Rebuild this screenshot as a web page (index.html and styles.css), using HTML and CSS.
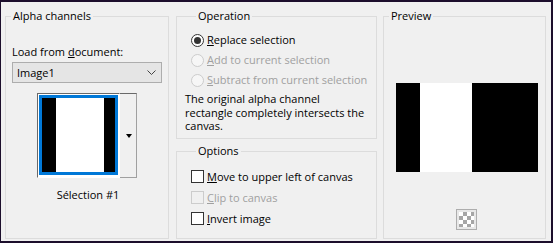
FILE: index.html
```html
<!DOCTYPE html>
<html>
<head>
<meta charset="utf-8">
<link rel="stylesheet" href="styles.css">
</head>
<body>
<div class="dialog">
  <fieldset class="group alpha">
    <legend>Alpha channels</legend>
    <div class="lbl-load">Load from <u>d</u>ocument:</div>
    <div class="combo">
      <span>Image1</span>
      <svg class="chev" width="9" height="5" viewBox="0 0 9 5"><polyline points="0.5,0.5 4.5,4.5 8.5,0.5" fill="none" stroke="#444" stroke-width="1"/></svg>
    </div>
    <div class="thumb-row">
      <div class="thumb"><div class="thumb-sel"><div class="thumb-img"></div></div></div>
      <div class="thumb-btn"><span class="tri"></span></div>
    </div>
    <div class="thumb-label">Sélection #1</div>
  </fieldset>

  <div class="middle">
    <fieldset class="group operation">
      <legend>Operation</legend>
      <div class="row"><span class="radio checked"></span><span><u>R</u>eplace selection</span></div>
      <div class="row disabled"><span class="radio"></span><span><u>A</u>dd to current selection</span></div>
      <div class="row disabled"><span class="radio"></span><span><u>S</u>ubtract from current selection</span></div>
      <p class="info">The original alpha channel rectangle completely intersects the canvas.</p>
    </fieldset>
    <fieldset class="group options">
      <legend>Options</legend>
      <div class="row crow"><span class="check"></span><span><u>M</u>ove to upper left of canvas</span></div>
      <div class="row crow disabled"><span class="check"></span><span><u>C</u>lip to canvas</span></div>
      <div class="row crow"><span class="check"></span><span><u>I</u>nvert image</span></div>
    </fieldset>
  </div>

  <fieldset class="group preview">
    <legend>Preview</legend>
    <div class="preview-img"></div>
    <div class="checker-btn"><div class="checker"></div></div>
  </fieldset>
</div>
</body>
</html>
```

FILE: styles.css
```css
html, body {
  margin: 0;
  padding: 0;
  background: #f0f0f0;
}
.dialog {
  box-sizing: border-box;
  width: 553px;
  height: 243px;
  border-style: solid;
  border-color: #1c0e2c;
  border-width: 2px 2px 2px 1px;
  background: #f0f0f0;
  display: flex;
  padding: 6px 5px 2px 4px;
  font-family: "Open Sans", "Noto Sans", sans-serif;
  font-size: 11px;
  color: #000;
}
.group {
  margin: 0;
  padding: 0;
  border: 1px solid #dcdcdc;
  min-width: 0;
  box-sizing: border-box;
}
.group legend {
  margin-left: 5px;
  padding: 0 2px;
  line-height: 16px;
  height: 16px;
}
.alpha {
  width: 164px;
  padding: 0 6px;
}
.alpha legend { margin-left: -1px; }
.middle {
  width: 201px;
  margin-left: 7px;
  display: flex;
  flex-direction: column;
  gap: 4px;
}
.preview {
  width: 163px;
  margin-left: 6px;
}
.lbl-load {
  margin-top: 20px;
  line-height: 16px;
  height: 16px;
}
.combo {
  margin-top: 2px;
  box-sizing: border-box;
  width: 150px;
  height: 21px;
  border: 1px solid #adadad;
  background: #e5e5e5;
  display: flex;
  align-items: center;
  justify-content: space-between;
  padding: 0 5px 0 4px;
}
.combo span { line-height: 16px; }
.thumb-row {
  display: flex;
  margin-top: 10px;
  margin-left: 25px;
}
.thumb {
  border-style: solid;
  border-width: 1px;
  border-color: #696969 #ffffff #ffffff #696969;
  padding: 1px;
  background: #fff;
}
.thumb-sel {
  border: 3px solid #0078d7;
}
.thumb-img {
  width: 73px;
  height: 74px;
  background: linear-gradient(to right, #000 0 14px, #fff 14px 62px, #000 62px);
}
.thumb-btn {
  box-sizing: border-box;
  width: 17px;
  height: 85px;
  border-style: solid;
  border-width: 1px 1px 1px 0;
  border-color: #696969 #a0a0a0 #a0a0a0 transparent;
  background: #f0f0f0;
  display: flex;
  align-items: center;
  justify-content: center;
}
.tri {
  width: 0;
  height: 0;
  border-left: 3.5px solid transparent;
  border-right: 3.5px solid transparent;
  border-top: 4px solid #000;
  margin-left: 1px;
}
.thumb-label {
  margin-top: 9px;
  text-align: center;
  line-height: 16px;
  padding-left: 2px;
}
.operation {
  height: 131px;
  padding: 0 0 0 14px;
}
.options {
  flex: 1;
  padding: 0 0 0 14px;
}
.row {
  display: flex;
  align-items: center;
  gap: 3px;
  height: 20px;
  line-height: 16px;
  white-space: nowrap;
}
.operation .row:first-of-type { margin-top: 6px; }
.crow { height: 21px; }
.crow:first-of-type { margin-top: 7px; }
.disabled { color: #a0a0a0; }
.radio {
  box-sizing: border-box;
  width: 13px;
  height: 13px;
  border-radius: 50%;
  border: 1px solid #333;
  background: #fff;
  display: flex;
  align-items: center;
  justify-content: center;
  flex: none;
}
.radio.checked::after {
  content: "";
  width: 7px;
  height: 7px;
  border-radius: 50%;
  background: #333;
}
.disabled .radio {
  border-color: #cccccc;
  background: #f6f6f6;
}
.check {
  box-sizing: border-box;
  width: 13px;
  height: 13px;
  border: 1px solid #333;
  background: #fff;
  flex: none;
}
.disabled .check {
  border-color: #cccccc;
  background: #f0f0f0;
}
.info {
  margin: 2px 0 0 -6px;
  line-height: 13.5px;
  width: 185px;
}
.preview-img {
  margin: 59px 0 0 12px;
  width: 142px;
  height: 89px;
  background: linear-gradient(to right, #000 0 24px, #fff 24px 76px, #000 76px);
}
.checker-btn {
  box-sizing: border-box;
  width: 21px;
  height: 21px;
  margin: 37px 0 0 72px;
  border: 1px solid #adadad;
  padding: 2px;
  background: #e8e8e8;
}
.checker {
  width: 15px;
  height: 15px;
  background-color: #fff;
  background-image:
    linear-gradient(45deg, #a6a6a6 25%, transparent 25%, transparent 75%, #a6a6a6 75%),
    linear-gradient(45deg, #a6a6a6 25%, transparent 25%, transparent 75%, #a6a6a6 75%);
  background-size: 8px 8px;
  background-position: 0 0, 4px 4px;
}
```
